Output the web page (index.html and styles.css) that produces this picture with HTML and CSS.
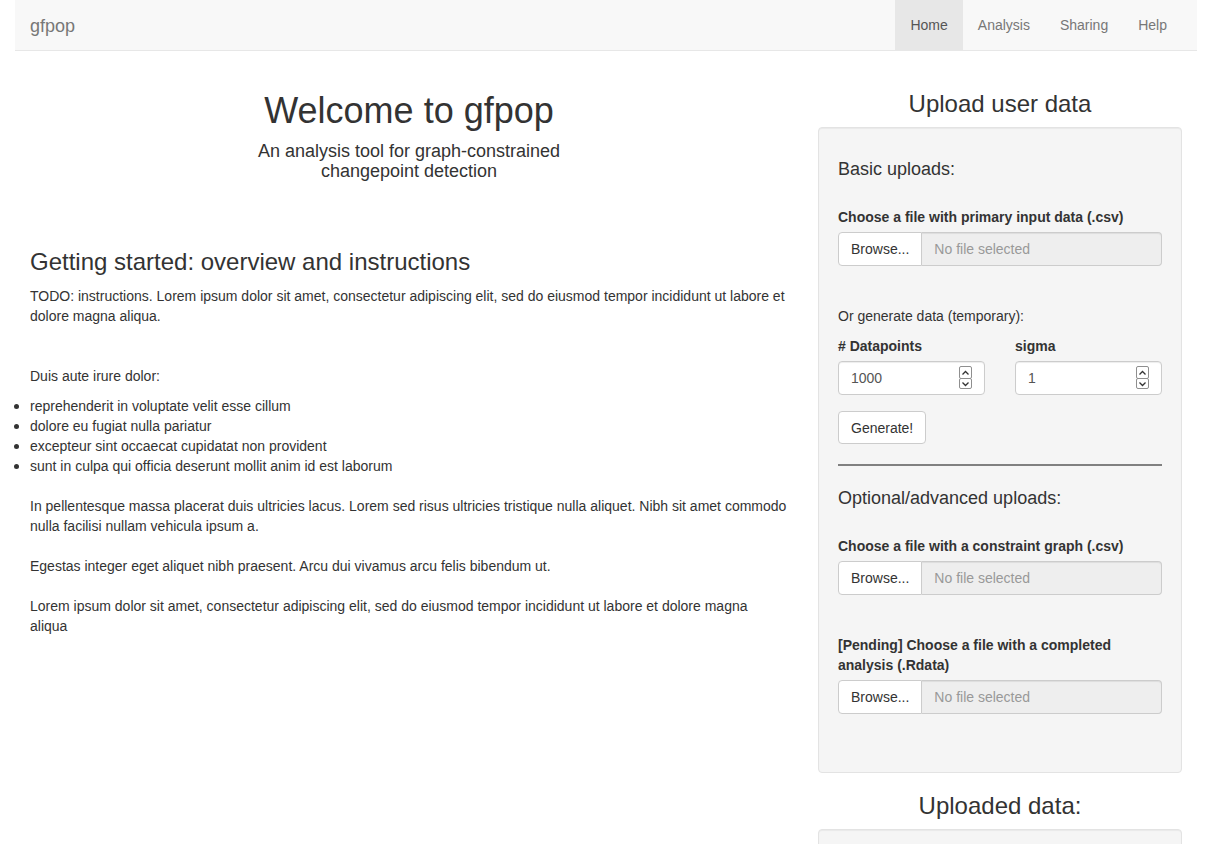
FILE: index.html
```html
<!DOCTYPE html>
<html lang="en">
<head>
<meta charset="utf-8">
<title>gfpop</title>
<link rel="stylesheet" href="styles.css">
</head>
<body>
<div class="page">
  <nav class="navbar">
    <span class="brand">gfpop</span>
    <ul class="nav">
      <li class="active"><a>Home</a></li>
      <li><a>Analysis</a></li>
      <li><a>Sharing</a></li>
      <li><a>Help</a></li>
    </ul>
  </nav>

  <div class="main">
    <div class="col-left">
      <h1 class="title">Welcome to gfpop</h1>
      <h4 class="subtitle">An analysis tool for graph-constrained changepoint detection</h4>

      <h3 class="section-title">Getting started: overview and instructions</h3>
      <div class="body-text">
        <p>TODO: instructions. Lorem ipsum dolor sit amet, consectetur adipiscing elit, sed do eiusmod tempor incididunt ut labore et dolore magna aliqua.</p>
        <p class="p-duis">Duis aute irure dolor:</p>
        <ul class="bullets">
          <li>reprehenderit in voluptate velit esse cillum</li>
          <li>dolore eu fugiat nulla pariatur</li>
          <li>excepteur sint occaecat cupidatat non provident</li>
          <li>sunt in culpa qui officia deserunt mollit anim id est laborum</li>
        </ul>
        <p class="p-gap">In pellentesque massa placerat duis ultricies lacus. Lorem sed risus ultricies tristique nulla aliquet. Nibh sit amet commodo nulla facilisi nullam vehicula ipsum a.</p>
        <p class="p-gap">Egestas integer eget aliquet nibh praesent. Arcu dui vivamus arcu felis bibendum ut.</p>
        <p class="p-gap">Lorem ipsum dolor sit amet, consectetur adipiscing elit, sed do eiusmod tempor incididunt ut labore et dolore magna aliqua</p>
      </div>
    </div>

    <div class="col-right">
      <h3 class="panel-title">Upload user data</h3>
      <div class="well">
        <h4 class="well-heading">Basic uploads:</h4>
        <div class="file-group first">
          <label class="ctl-label">Choose a file with primary input data (.csv)</label>
          <div class="file-input">
            <span class="browse">Browse...</span>
            <input class="file-name" type="text" placeholder="No file selected" readonly>
          </div>
        </div>

        <p class="gen-note">Or generate data (temporary):</p>
        <div class="num-row">
          <div class="num-group">
            <label class="ctl-label">#&nbsp;Datapoints</label>
            <div class="num-wrap">
              <input class="form-control" type="text" value="1000">
              <span class="spinner" aria-hidden="true">
                <span class="spin up"><svg viewBox="0 0 9 6" width="9" height="6"><path d="M1.5 4.5 L4.5 1.5 L7.5 4.5" fill="none" stroke="#333" stroke-width="1.3"/></svg></span>
                <span class="spin down"><svg viewBox="0 0 9 6" width="9" height="6"><path d="M1.5 1.5 L4.5 4.5 L7.5 1.5" fill="none" stroke="#333" stroke-width="1.3"/></svg></span>
              </span>
            </div>
          </div>
          <div class="num-group">
            <label class="ctl-label">sigma</label>
            <div class="num-wrap">
              <input class="form-control" type="text" value="1">
              <span class="spinner" aria-hidden="true">
                <span class="spin up"><svg viewBox="0 0 9 6" width="9" height="6"><path d="M1.5 4.5 L4.5 1.5 L7.5 4.5" fill="none" stroke="#333" stroke-width="1.3"/></svg></span>
                <span class="spin down"><svg viewBox="0 0 9 6" width="9" height="6"><path d="M1.5 1.5 L4.5 4.5 L7.5 1.5" fill="none" stroke="#333" stroke-width="1.3"/></svg></span>
              </span>
            </div>
          </div>
        </div>
        <button class="btn" type="button">Generate!</button>
        <hr class="divider">

        <h4 class="well-heading after-hr">Optional/advanced uploads:</h4>
        <div class="file-group first">
          <label class="ctl-label">Choose a file with a constraint graph (.csv)</label>
          <div class="file-input">
            <span class="browse">Browse...</span>
            <input class="file-name" type="text" placeholder="No file selected" readonly>
          </div>
        </div>
        <div class="file-group last">
          <label class="ctl-label">[Pending] Choose a file with a completed analysis (.Rdata)</label>
          <div class="file-input">
            <span class="browse">Browse...</span>
            <input class="file-name" type="text" placeholder="No file selected" readonly>
          </div>
        </div>
      </div>

      <h3 class="panel-title second">Uploaded data:</h3>
      <div class="well small">
        <p class="empty-note">&nbsp;</p>
      </div>
    </div>
  </div>
</div>
</body>
</html>
```

FILE: styles.css
```css
html {
  scrollbar-width: none;
}
html::-webkit-scrollbar {
  display: none;
}
* {
  box-sizing: border-box;
}
body {
  margin: 0;
  font-family: "Liberation Sans", Arial, Helvetica, sans-serif;
  font-size: 14px;
  line-height: 20px;
  color: #333;
  background: #fff;
}
.page {
  width: 1182px;
  margin-left: 15px;
}

/* navbar */
.navbar {
  display: flex;
  justify-content: space-between;
  align-items: stretch;
  height: 51px;
  background: #f8f8f8;
  border-bottom: 1px solid #e7e7e7;
  padding-right: 15px;
  margin-bottom: 20px;
}
.brand {
  padding: 16px 15px 14px;
  font-size: 18px;
  line-height: 20px;
  color: #777;
}
.nav {
  display: flex;
  list-style: none;
  margin: 0;
  padding: 0;
}
.nav a {
  display: block;
  padding: 15px;
  line-height: 20px;
  color: #777;
}
.nav .active a {
  background: #e7e7e7;
  color: #555;
}

/* layout */
.main {
  display: flex;
  gap: 30px;
  padding: 0 15px;
}
.col-left {
  flex: 0 0 758px;
}
.col-right {
  flex: 0 0 364px;
}

h1, h3, h4 {
  font-family: inherit;
  font-weight: 500;
  line-height: 1.1;
  color: inherit;
}
.title {
  font-size: 36px;
  text-align: center;
  margin: 20px 0 10px;
}
.subtitle {
  font-size: 18px;
  line-height: 20px;
  text-align: center;
  max-width: 364px;
  margin: 10px auto 10px;
}
.section-title {
  font-size: 24px;
  margin: 68px 0 10px;
}
.body-text {
  padding-top: 1px;
}
p {
  margin: 0 0 10px;
}
.p-duis {
  margin-top: 40px;
}
.bullets {
  margin: 0 0 10px;
  padding-left: 0;
}
.bullets li::marker {
  font-size: 16px;
}
.p-gap {
  margin-top: 20px;
  margin-bottom: 20px;
}

/* right panel */
.panel-title {
  font-size: 24px;
  text-align: center;
  margin: 20px 0 10px;
}
.panel-title.second {
  margin-top: 19px;
}
.well {
  background: #f5f5f5;
  border: 1px solid #e3e3e3;
  border-radius: 4px;
  box-shadow: inset 0 1px 1px rgba(0, 0, 0, 0.05);
  padding: 19px 19px 18px;
  margin-bottom: 20px;
}
.well.small {
  min-height: 80px;
}
.well-heading {
  font-size: 18px;
  margin: 13px 0 10px;
}
.well-heading.after-hr {
  margin-top: 23px;
}
.ctl-label {
  display: block;
  font-weight: 700;
  margin-bottom: 5px;
}
.file-group {
  margin-bottom: 40px;
}
.file-group.first {
  margin-top: 27px;
}
.file-input {
  display: flex;
  height: 34px;
}
.browse {
  display: block;
  flex: 0 0 83px;
  height: 34px;
  padding: 6px 12px;
  background: #fff;
  border: 1px solid #ccc;
  border-radius: 4px 0 0 4px;
  color: #333;
  line-height: 20px;
}
.file-name {
  flex: 1 1 auto;
  min-width: 0;
  height: 34px;
  margin: 0;
  padding: 6px 12px;
  font: inherit;
  color: #555;
  background: #eee;
  border: 1px solid #ccc;
  border-left: 0;
  border-radius: 0 4px 4px 0;
  box-shadow: inset 0 1px 1px rgba(0, 0, 0, 0.075);
  outline: none;
}
.file-name::placeholder {
  color: #999;
}
.gen-note {
  margin: 0 0 10px;
}
.num-row {
  display: flex;
  gap: 30px;
}
.num-group {
  flex: 1 1 0;
  margin-bottom: 16px;
}
.num-wrap {
  position: relative;
}
.form-control {
  display: block;
  width: 100%;
  height: 34px;
  margin: 0;
  padding: 6px 12px;
  font: inherit;
  color: #555;
  background: #fff;
  border: 1px solid #ccc;
  border-radius: 4px;
  box-shadow: inset 0 1px 1px rgba(0, 0, 0, 0.075);
  outline: none;
}
.spinner {
  position: absolute;
  right: 13px;
  top: 5px;
  width: 13px;
  display: flex;
  flex-direction: column;
}
.spin {
  display: flex;
  align-items: center;
  justify-content: center;
  width: 13px;
  background: #fff;
  border: 1px solid #8f8f8f;
  border-radius: 2px;
}
.spin.up {
  height: 13px;
}
.spin.down {
  height: 11px;
  margin-top: -1px;
}
.btn {
  display: block;
  height: 33px;
  padding: 6px 12px;
  font: inherit;
  color: #333;
  background: #fff;
  border: 1px solid #ccc;
  border-radius: 4px;
  cursor: pointer;
}
.divider {
  margin: 20px 0;
  border: 0;
  border-top: 2px solid #808080;
  height: 0;
}
.empty-note {
  margin: 0;
}
```
